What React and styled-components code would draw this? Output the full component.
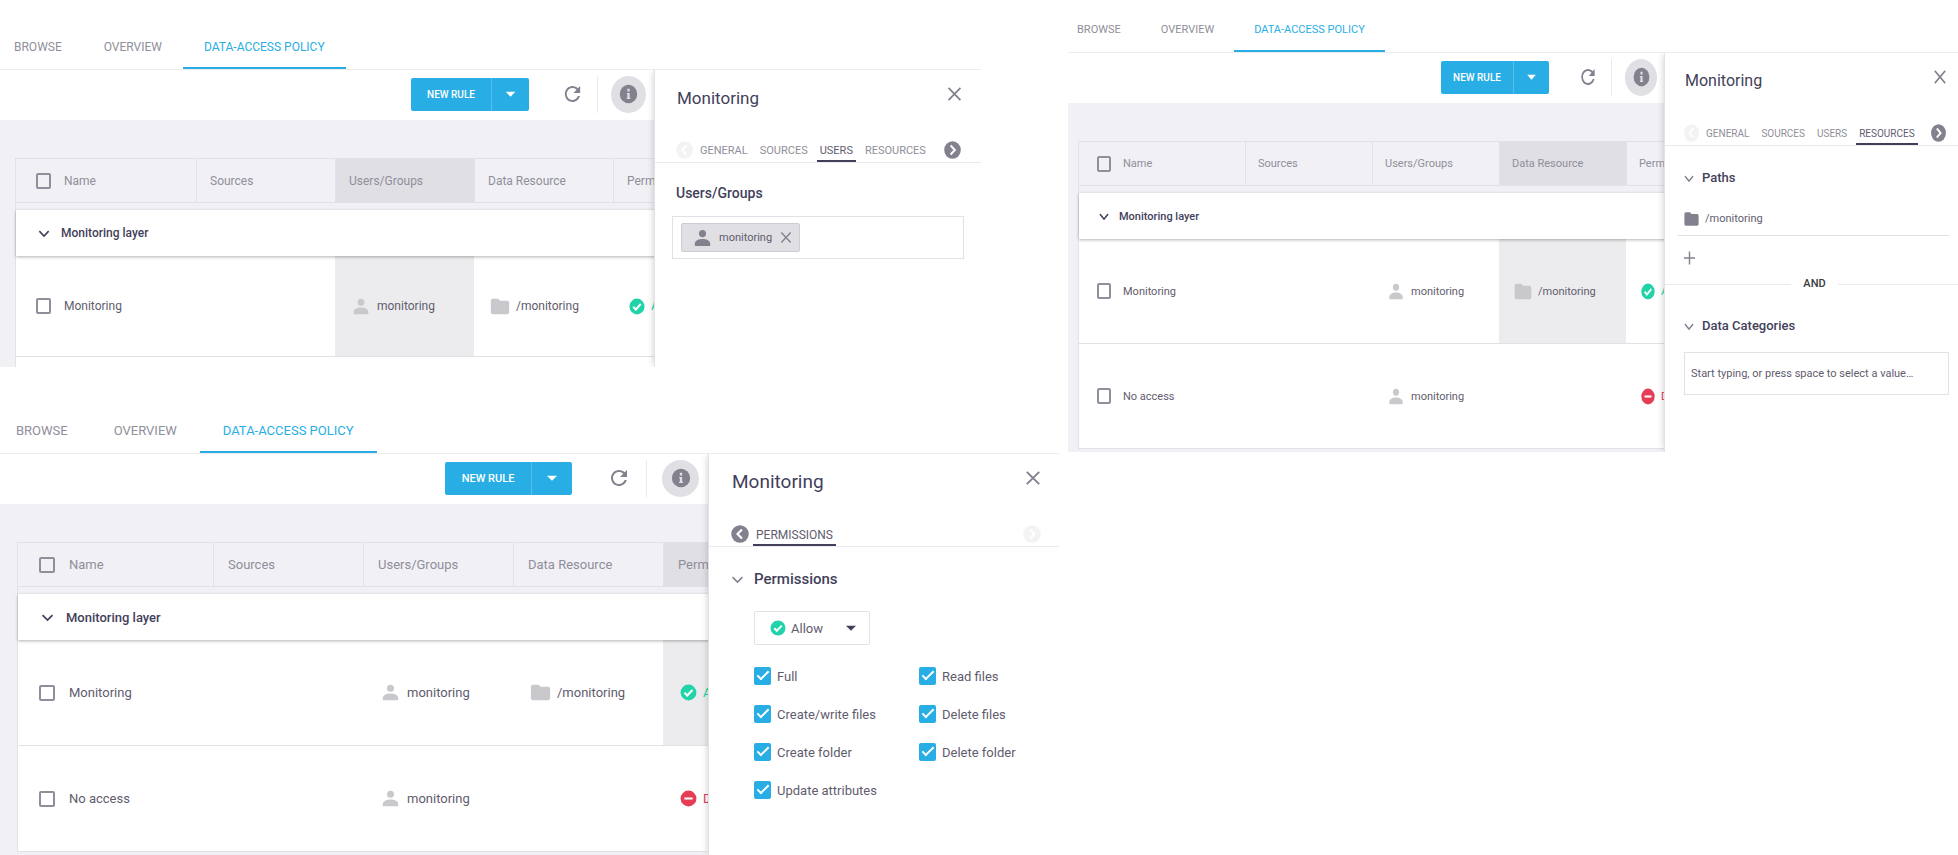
import React from "react";
import styled, { createGlobalStyle, ThemeProvider, css } from "styled-components";

const c = {
  ink: "#433f5b",
  text: "#5f5c6e",
  muted: "#908e9a",
  icon: "#84818f",
  pale: "#c9c8cc",
  line: "#e2e1e6",
  soft: "#f3f3f5",
  ground: "#f1f0f5",
  headOn: "#e0dfe4",
  cellOn: "#ececee",
  blue: "#28aee4",
  green: "#20d3a8",
  red: "#e63d56",
};

// Each pane is drawn at its own density; every part reads its metrics from here.
const medium = {
  ratio: 0.94, text: 12, small: 11, button: 10, title: 17, heading: 14,
  firstTab: 14, tabPad: 21, newRule: 80, caret: 38, afterButton: 32, toolGap: 13, info: 35, edge: 8,
  tableLeft: 15, nameCol: 180, col: 139, check: 15, checkLeft: 20, gap: 13, rowHeight: 101,
  panel: 327, panelPad: 22, panelRight: 17, navRight: 20, closeRight: 15,
};
const large = {
  ratio: 1, text: 13, small: 12, button: 11, title: 19, heading: 15,
  firstTab: 16, tabPad: 23, newRule: 86, caret: 41, afterButton: 35, toolGap: 15, info: 37, edge: 9,
  tableLeft: 17, nameCol: 195, col: 150, check: 16, checkLeft: 21, gap: 14, rowHeight: 106,
  panel: 351, panelPad: 23, panelRight: 17, navRight: 18, closeRight: 14,
};
const small = {
  ratio: 0.85, text: 11, small: 10, button: 10, title: 16, heading: 13,
  firstTab: 9, tabPad: 20, newRule: 72, caret: 36, afterButton: 29, toolGap: 13, info: 32, edge: 7,
  tableLeft: 10, nameCol: 166, col: 127, check: 14, checkLeft: 18, gap: 12, rowHeight: 105,
  panel: 294, panelPad: 20, panelRight: 9, navRight: 12, closeRight: 8,
};

const Global = createGlobalStyle`
  *, *::before, *::after { box-sizing: border-box; }
  body { margin: 0; background: #fff; font-family: Roboto, "Liberation Sans", sans-serif; color: ${c.text}; }
  button, input, select { font: inherit; color: inherit; margin: 0; }
  button { border: 0; padding: 0; background: none; cursor: pointer; }
  h2, h3 { margin: 0; font-weight: 400; }
  a { color: inherit; text-decoration: none; }
`;

/* ---------- icons ---------- */

const Svg = styled.svg`
  flex: none;
  display: block;
  width: ${(p) => Math.round(p.$size * p.theme.ratio)}px;
  height: ${(p) => p.$size}px;
  color: ${(p) => p.$color || "inherit"};
`;
const Icon = ({ size = 23, color, children }) => (
  <Svg $size={size} $color={color} viewBox="0 0 24 24" preserveAspectRatio="none" aria-hidden="true" fill="currentColor">
    {children}
  </Svg>
);
const Person = (p) => (
  <Icon {...p}>
    <circle cx="12" cy="7.6" r="3.7" />
    <path d="M4 20v-2.4C4 14.4 8.6 13 12 13s8 1.4 8 4.6V20z" />
  </Icon>
);
const Folder = (p) => (
  <Icon {...p}>
    <path d="M10 4H4c-1.1 0-2 .9-2 2v12c0 1.1.9 2 2 2h16c1.1 0 2-.9 2-2V8c0-1.1-.9-2-2-2h-8l-2-2z" />
  </Icon>
);
const CheckCircle = (p) => (
  <Icon {...p}>
    <circle cx="12" cy="12" r="10" />
    <path d="M7 12.4l3.4 3.3L17 8.8" fill="none" stroke="#fff" strokeWidth="2.6" />
  </Icon>
);
const MinusCircle = (p) => (
  <Icon {...p}>
    <circle cx="12" cy="12" r="10" />
    <path d="M6.8 12h10.4" stroke="#fff" strokeWidth="2.6" />
  </Icon>
);
const Refresh = (p) => (
  <Icon {...p}>
    <path d="M17.65 6.35C16.2 4.9 14.21 4 12 4c-4.42 0-7.99 3.58-7.99 8s3.57 8 7.99 8c3.73 0 6.84-2.55 7.73-6h-2.08c-.82 2.33-3.04 4-5.65 4-3.31 0-6-2.69-6-6s2.69-6 6-6c1.66 0 3.14.69 4.22 1.78L13 11h7V4l-2.35 2.35z" />
  </Icon>
);
const Info = (p) => (
  <Icon {...p}>
    <circle cx="12" cy="12" r="10" />
    <path d="M12 6.4v2.8M12 10.8v6.6" fill="none" stroke="#e0dfe4" strokeWidth="2.6" />
    <path d="M10 11.4h2M10 16.8h4" fill="none" stroke="#e0dfe4" strokeWidth="1.2" />
  </Icon>
);
const Close = (p) => (
  <Icon {...p}>
    <path d="M5.8 5.8l12.4 12.4M18.2 5.8l-12.4 12.4" stroke="currentColor" strokeWidth="1.9" fill="none" />
  </Icon>
);
const Plus = (p) => (
  <Icon {...p}>
    <path d="M12 5v14M5 12h14" stroke="currentColor" strokeWidth="1.8" fill="none" />
  </Icon>
);
const Chevron = ({ weight = 2.4, ...p }) => (
  <Icon {...p}>
    <path d="M5 8.6l7 7 7-7" stroke="currentColor" strokeWidth={weight} fill="none" />
  </Icon>
);
const CaretDown = (p) => (
  <Icon {...p}>
    <path d="M6.5 9.5h11L12 15z" />
  </Icon>
);
const ArrowCircle = ({ back, ...p }) => (
  <Icon {...p}>
    <circle cx="12" cy="12" r="10.5" />
    <path d={back ? "M14.4 6.6L9 12l5.4 5.4" : "M9.6 6.6L15 12l-5.4 5.4"} stroke="#fff" strokeWidth="2.5" fill="none" />
  </Icon>
);

/* ---------- page and panes ---------- */

const Page = styled.main`
  display: grid;
  grid-template-columns: minmax(0, 6fr) minmax(0, 5fr);
  align-items: start;
`;
const Stack = styled.div`
  display: flex;
  flex-direction: column;
  gap: 34px;
`;
const Pane = styled.section`
  margin-right: ${(p) => p.$right || 0}px;
  padding-top: ${(p) => p.$top || 0}px;
  font-size: ${(p) => p.theme.text}px;
`;
const Tabs = styled.nav`
  display: flex;
  height: 53px;
  border-bottom: 1px solid #ededf0;
`;
const Tab = styled.a`
  display: flex;
  align-items: center;
  padding: 9px ${(p) => p.theme.tabPad}px 0;
  border-bottom: 2px solid ${(p) => (p.$on ? c.blue : "transparent")};
  color: ${(p) => (p.$on ? c.blue : c.muted)};
  white-space: nowrap;
  &:first-child { padding-left: ${(p) => p.theme.firstTab}px; }
`;
const Split = styled.div`
  display: grid;
  grid-template-columns: minmax(0, 1fr) ${(p) => p.theme.panel}px;
  overflow: hidden;
`;
const Work = styled.div`
  overflow: hidden;
  background: ${c.ground};
`;
const Toolbar = styled.div`
  display: flex;
  align-items: center;
  justify-content: flex-end;
  height: 50px;
  padding: 0 ${(p) => p.theme.edge}px 2px 0;
  background: #fff;
`;
const SplitButton = styled.div`
  display: flex;
  height: 33px;
  margin-right: ${(p) => p.theme.afterButton}px;
  border-radius: 2px;
  overflow: hidden;
  background: ${c.blue};
  color: #fff;
`;
const NewRule = styled.button`
  width: ${(p) => p.theme.newRule}px;
  font-size: ${(p) => p.theme.button}px;
  font-weight: 500;
`;
const More = styled.button`
  display: grid;
  place-items: center;
  width: ${(p) => p.theme.caret}px;
  border-left: 1px solid #55bfea;
`;
const ToolButton = styled.button`
  display: grid;
  place-items: center;
  color: ${c.icon};
`;
const ToolRule = styled.span`
  width: 1px;
  height: 37px;
  margin: 0 ${(p) => p.theme.toolGap}px;
  background: #ebebee;
`;
const InfoButton = styled.button`
  display: grid;
  place-items: center;
  width: ${(p) => p.theme.info}px;
  height: 37px;
  border-radius: 50%;
  background: ${c.headOn};
  color: ${c.icon};
`;

/* ---------- rules table ---------- */

const TableArea = styled.div`
  padding: 38px 0 ${(p) => p.$bottom}px ${(p) => p.theme.tableLeft}px;
`;
const Table = styled.table`
  table-layout: fixed;
  width: ${(p) => p.theme.nameCol + p.theme.col * 4}px;
  border-spacing: 0;
  border-left: 1px solid ${c.line};
`;
const Col = styled.col`
  width: ${(p) => (p.$name ? p.theme.nameCol : p.theme.col)}px;
`;
const Head = styled.th`
  height: 45px;
  padding: 0 0 0 ${(p) => (p.$name ? p.theme.checkLeft : p.theme.gap)}px;
  border: solid ${c.line};
  border-width: 1px 0 1px ${(p) => (p.$name ? 0 : 1)}px;
  background: ${(p) => (p.$on ? c.headOn : "transparent")};
  color: ${c.muted};
  font-weight: 400;
  text-align: left;
  white-space: nowrap;
`;
const GroupCell = styled.td`
  padding: 7px 0 0;
  background: ${c.ground};
`;
const GroupBar = styled.button`
  position: relative;
  display: flex;
  align-items: center;
  gap: ${(p) => p.theme.gap - 4}px;
  width: 100%;
  height: 46px;
  padding-left: ${(p) => p.theme.checkLeft}px;
  background: #fff;
  box-shadow: 0 1px 3px rgba(0, 0, 0, 0.3);
  color: ${c.ink};
  font-weight: 500;
`;
const Cell = styled.td`
  height: ${(p) => p.$height || p.theme.rowHeight}px;
  padding: 0 0 0 ${(p) => (p.$name ? p.theme.checkLeft : p.theme.gap)}px;
  border-bottom: ${(p) => (p.$height ? 0 : 1)}px solid ${c.line};
  background: ${(p) => (p.$on ? c.cellOn : "#fff")};
  white-space: nowrap;
`;
const Entry = styled.span`
  display: flex;
  align-items: center;
  gap: 5px;
  padding-left: 2px;
  color: ${(p) => p.$color || c.text};
`;
const Named = styled.label`
  display: flex;
  align-items: center;
  gap: ${(p) => p.theme.gap}px;
`;
const Box = styled.input.attrs({ type: "checkbox" })`
  appearance: none;
  flex: none;
  width: ${(p) => p.theme.check}px;
  height: 16px;
  border: 2px solid #918e9c;
  border-radius: 2px;
`;

const COLUMNS = ["Name", "Sources", "Users/Groups", "Data Resource", "Permissions"];

function RulesTable({ active, rows, stub }) {
  return (
    <Table>
      <colgroup>
        {COLUMNS.map((n, i) => <Col key={n} $name={i === 0} />)}
      </colgroup>
      <thead>
        <tr>
          {COLUMNS.map((n, i) => (
            <Head key={n} scope="col" $name={i === 0} $on={active === n}>
              {i === 0 ? <Named><Box />{n}</Named> : n}
            </Head>
          ))}
        </tr>
      </thead>
      <tbody>
        <tr>
          <GroupCell colSpan={5}>
            <GroupBar type="button"><Chevron size={17} />Monitoring layer</GroupBar>
          </GroupCell>
        </tr>
        {rows.map((r) => {
          const on = (name) => Boolean(r.selected) && active === name;
          return (
            <tr key={r.name}>
              <Cell $name><Named><Box />{r.name}</Named></Cell>
              <Cell $on={on("Sources")} />
              <Cell $on={on("Users/Groups")}>
                <Entry><Person color={c.pale} />{r.user}</Entry>
              </Cell>
              <Cell $on={on("Data Resource")}>
                {r.path && <Entry><Folder color={c.pale} />{r.path}</Entry>}
              </Cell>
              <Cell $on={on("Permissions")}>
                {r.allow
                  ? <Entry $color={c.green}><CheckCircle size={19} />Allow</Entry>
                  : <Entry $color={c.red}><MinusCircle size={19} />Deny</Entry>}
              </Cell>
            </tr>
          );
        })}
        {stub && <tr><Cell colSpan={5} $height={stub} /></tr>}
      </tbody>
    </Table>
  );
}

/* ---------- side panel ---------- */

const Panel = styled.aside`
  position: relative;
  border-left: 1px solid ${c.line};
  background: #fff;
  box-shadow: -3px 0 6px -2px rgba(0, 0, 0, 0.16);
`;
const PanelHead = styled.header`
  display: flex;
  justify-content: space-between;
  height: 68px;
  padding: 12px ${(p) => p.theme.closeRight}px 0 ${(p) => p.theme.panelPad}px;
`;
const Title = styled.h2`
  color: ${c.ink};
  font-size: ${(p) => p.theme.title}px;
  line-height: 32px;
`;
const CloseButton = styled.button`
  align-self: flex-start;
  color: ${c.icon};
`;
const PanelTabs = styled.nav`
  display: flex;
  align-items: center;
  gap: 6px;
  height: 25px;
  padding: 0 ${(p) => p.theme.navRight}px 0 ${(p) => p.theme.panelPad - 2}px;
  border-bottom: 1px solid #e9e9ec;
`;
const Step = styled.button`
  margin-left: ${(p) => (p.$end ? "auto" : 0)};
  margin-right: ${(p) => (p.$end ? "-1px" : "-3px")};
  color: ${(p) => (p.disabled ? "#f3f3f4" : c.icon)};
`;
const PanelTab = styled.a`
  display: flex;
  align-items: center;
  align-self: stretch;
  padding: 3px 3px 0;
  border-bottom: 2px solid ${(p) => (p.$on ? c.ink : "transparent")};
  color: ${(p) => (p.$on ? c.text : c.muted)};
  font-size: ${(p) => p.theme.small}px;
`;
const heading = css`
  color: ${c.ink};
  font-size: ${(p) => p.theme.heading}px;
  font-weight: 500;
  line-height: 24px;
`;
const PlainHeading = styled.h3`
  ${heading}
  padding: 18px 0 0 ${(p) => p.theme.panelPad - 1}px;
`;
const Section = styled.h3`
  ${heading}
  display: flex;
  align-items: center;
  gap: ${(p) => p.theme.gap - 6}px;
  padding: 20px 0 0 ${(p) => p.theme.panelPad - 3}px;
`;
const Fold = styled.button`
  color: ${c.icon};
`;
const fieldBox = css`
  height: 43px;
  border: 1px solid ${c.line};
  background: #fff;
`;
const ChipField = styled.div`
  ${fieldBox}
  display: flex;
  align-items: center;
  margin: 11px ${(p) => p.theme.panelRight}px 0;
  padding: 0 8px;
`;
const Chip = styled.span`
  display: flex;
  align-items: center;
  gap: 5px;
  height: 29px;
  padding: 0 4px 0 9px;
  border: 1px solid #cdccd2;
  border-radius: 2px;
  background: ${c.headOn};
  font-size: ${(p) => p.theme.small}px;
`;
const ChipInput = styled.input`
  flex: 1;
  min-width: 0;
  border: 0;
  outline: 0;
  background: none;
`;
const SearchInput = styled.input`
  ${fieldBox}
  display: block;
  width: calc(100% - ${(p) => p.theme.panelPad + p.theme.panelRight - 1}px);
  margin: 14px 0 0 ${(p) => p.theme.panelPad - 1}px;
  padding: 0 6px;
  &::placeholder { color: ${c.text}; opacity: 1; }
`;
const PathRow = styled.div`
  display: flex;
  align-items: center;
  gap: 5px;
  height: 37px;
  margin: 9px ${(p) => p.theme.panelRight}px 0 13px;
  padding: 3px 0 0 5px;
  border-bottom: 1px solid ${c.line};
`;
const AddButton = styled.button`
  display: block;
  margin: 11px 0 0 ${(p) => p.theme.panelPad - 5}px;
  color: ${c.icon};
`;
const Joiner = styled.div`
  display: grid;
  grid-template-columns: 21fr auto 20fr;
  align-items: center;
  gap: 12px;
  margin: 8px 0 3px;
  color: #3a3a3e;
  font-size: 11px;
  font-weight: 500;
  line-height: 14px;
  &::before, &::after { content: ""; height: 1px; background: #ebebee; }
`;
const SelectBox = styled.label`
  display: flex;
  align-items: center;
  gap: 4px;
  width: 116px;
  height: 34px;
  margin: 20px 0 12px 45px;
  padding: 0 7px 0 14px;
  border: 1px solid ${c.line};
  border-radius: 2px;
`;
const Select = styled.select`
  appearance: none;
  flex: 1;
  min-width: 0;
  border: 0;
  outline: 0;
  background: none;
`;
const Grants = styled.div`
  display: grid;
  grid-template-columns: 165px 1fr;
  padding-left: 45px;
`;
const Grant = styled.label`
  display: flex;
  align-items: center;
  gap: 6px;
  height: 38px;
  white-space: nowrap;
`;
const Tick = styled.input.attrs({ type: "checkbox", defaultChecked: true })`
  appearance: none;
  display: grid;
  place-items: center;
  width: 17px;
  height: 18px;
  border-radius: 2px;
  background: ${c.blue};
  &:checked::after {
    content: "";
    width: 12px;
    height: 6px;
    border: solid #fff;
    border-width: 0 0 2px 2px;
    transform: translateY(-2px) rotate(-45deg);
  }
`;

function PanelNav({ tabs, active, atStart }) {
  return (
    <PanelTabs>
      <Step type="button" aria-label="Previous tabs" disabled={atStart}><ArrowCircle back size={20} /></Step>
      {tabs.map((t) => <PanelTab key={t} href="#" $on={t === active}>{t}</PanelTab>)}
      <Step type="button" aria-label="Next tabs" $end disabled={!atStart}><ArrowCircle size={20} /></Step>
    </PanelTabs>
  );
}

function Foldable({ children }) {
  return (
    <Section>
      <Fold type="button" aria-label={`Collapse ${children}`}><Chevron size={17} weight={2.2} /></Fold>
      {children}
    </Section>
  );
}

function UsersBody() {
  return (
    <>
      <PlainHeading>Users/Groups</PlainHeading>
      <ChipField>
        <Chip>
          <Person size={24} color={c.icon} />
          monitoring
          <button type="button" aria-label="Remove monitoring"><Close size={19} color={c.icon} /></button>
        </Chip>
        <ChipInput aria-label="Users/Groups" />
      </ChipField>
    </>
  );
}

const GRANTS = ["Full", "Read files", "Create/write files", "Delete files", "Create folder", "Delete folder", "Update attributes"];

function PermissionsBody() {
  return (
    <>
      <Foldable>Permissions</Foldable>
      <SelectBox>
        <CheckCircle size={18} color={c.green} />
        <Select aria-label="Permission"><option>Allow</option></Select>
        <CaretDown size={22} color={c.ink} />
      </SelectBox>
      <Grants>
        {GRANTS.map((g) => <Grant key={g}><Tick />{g}</Grant>)}
      </Grants>
    </>
  );
}

function ResourcesBody() {
  return (
    <>
      <Foldable>Paths</Foldable>
      <PathRow><Folder size={20} color={c.icon} />/monitoring</PathRow>
      <AddButton type="button" aria-label="Add path"><Plus size={22} /></AddButton>
      <Joiner>AND</Joiner>
      <Foldable>Data Categories</Foldable>
      <SearchInput aria-label="Data Categories" placeholder="Start typing, or press space to select a value…" />
    </>
  );
}

/* ---------- assembly ---------- */

const RULES = [
  { name: "Monitoring", user: "monitoring", path: "/monitoring", allow: true, selected: true },
  { name: "No access", user: "monitoring", allow: false },
];
const FIRST_TABS = ["GENERAL", "SOURCES", "USERS", "RESOURCES"];

function PolicyPane({ metrics, top, right, column, rows, stub, bottom, tabs, tab, atStart, children }) {
  return (
    <ThemeProvider theme={metrics}>
      <Pane $top={top} $right={right}>
        <Tabs>
          <Tab href="#">BROWSE</Tab>
          <Tab href="#">OVERVIEW</Tab>
          <Tab href="#" $on>DATA-ACCESS POLICY</Tab>
        </Tabs>
        <Split>
          <Work>
            <Toolbar>
              <SplitButton>
                <NewRule type="button">NEW RULE</NewRule>
                <More type="button" aria-label="More rule types"><CaretDown size={22} /></More>
              </SplitButton>
              <ToolButton type="button" aria-label="Refresh"><Refresh size={24} /></ToolButton>
              <ToolRule />
              <InfoButton type="button" aria-label="Details"><Info size={22} /></InfoButton>
            </Toolbar>
            <TableArea $bottom={bottom}>
              <RulesTable active={column} rows={rows} stub={stub} />
            </TableArea>
          </Work>
          <Panel>
            <PanelHead>
              <Title>Monitoring</Title>
              <CloseButton type="button" aria-label="Close"><Close size={24} /></CloseButton>
            </PanelHead>
            <PanelNav tabs={tabs} active={tab} atStart={atStart} />
            {children}
          </Panel>
        </Split>
      </Pane>
    </ThemeProvider>
  );
}

export default function App() {
  return (
    <>
      <Global />
      <Page>
        <Stack>
          <PolicyPane metrics={medium} top={17} right={87} column="Users/Groups" rows={RULES.slice(0, 1)}
            stub={10} bottom={0} tabs={FIRST_TABS} tab="USERS" atStart>
            <UsersBody />
          </PolicyPane>
          <PolicyPane metrics={large} right={9} column="Permissions" rows={RULES} bottom={3}
            tabs={["PERMISSIONS"]} tab="PERMISSIONS">
            <PermissionsBody />
          </PolicyPane>
        </Stack>
        <PolicyPane metrics={small} column="Data Resource" rows={RULES} bottom={3}
          tabs={FIRST_TABS} tab="RESOURCES" atStart>
          <ResourcesBody />
        </PolicyPane>
      </Page>
    </>
  );
}
